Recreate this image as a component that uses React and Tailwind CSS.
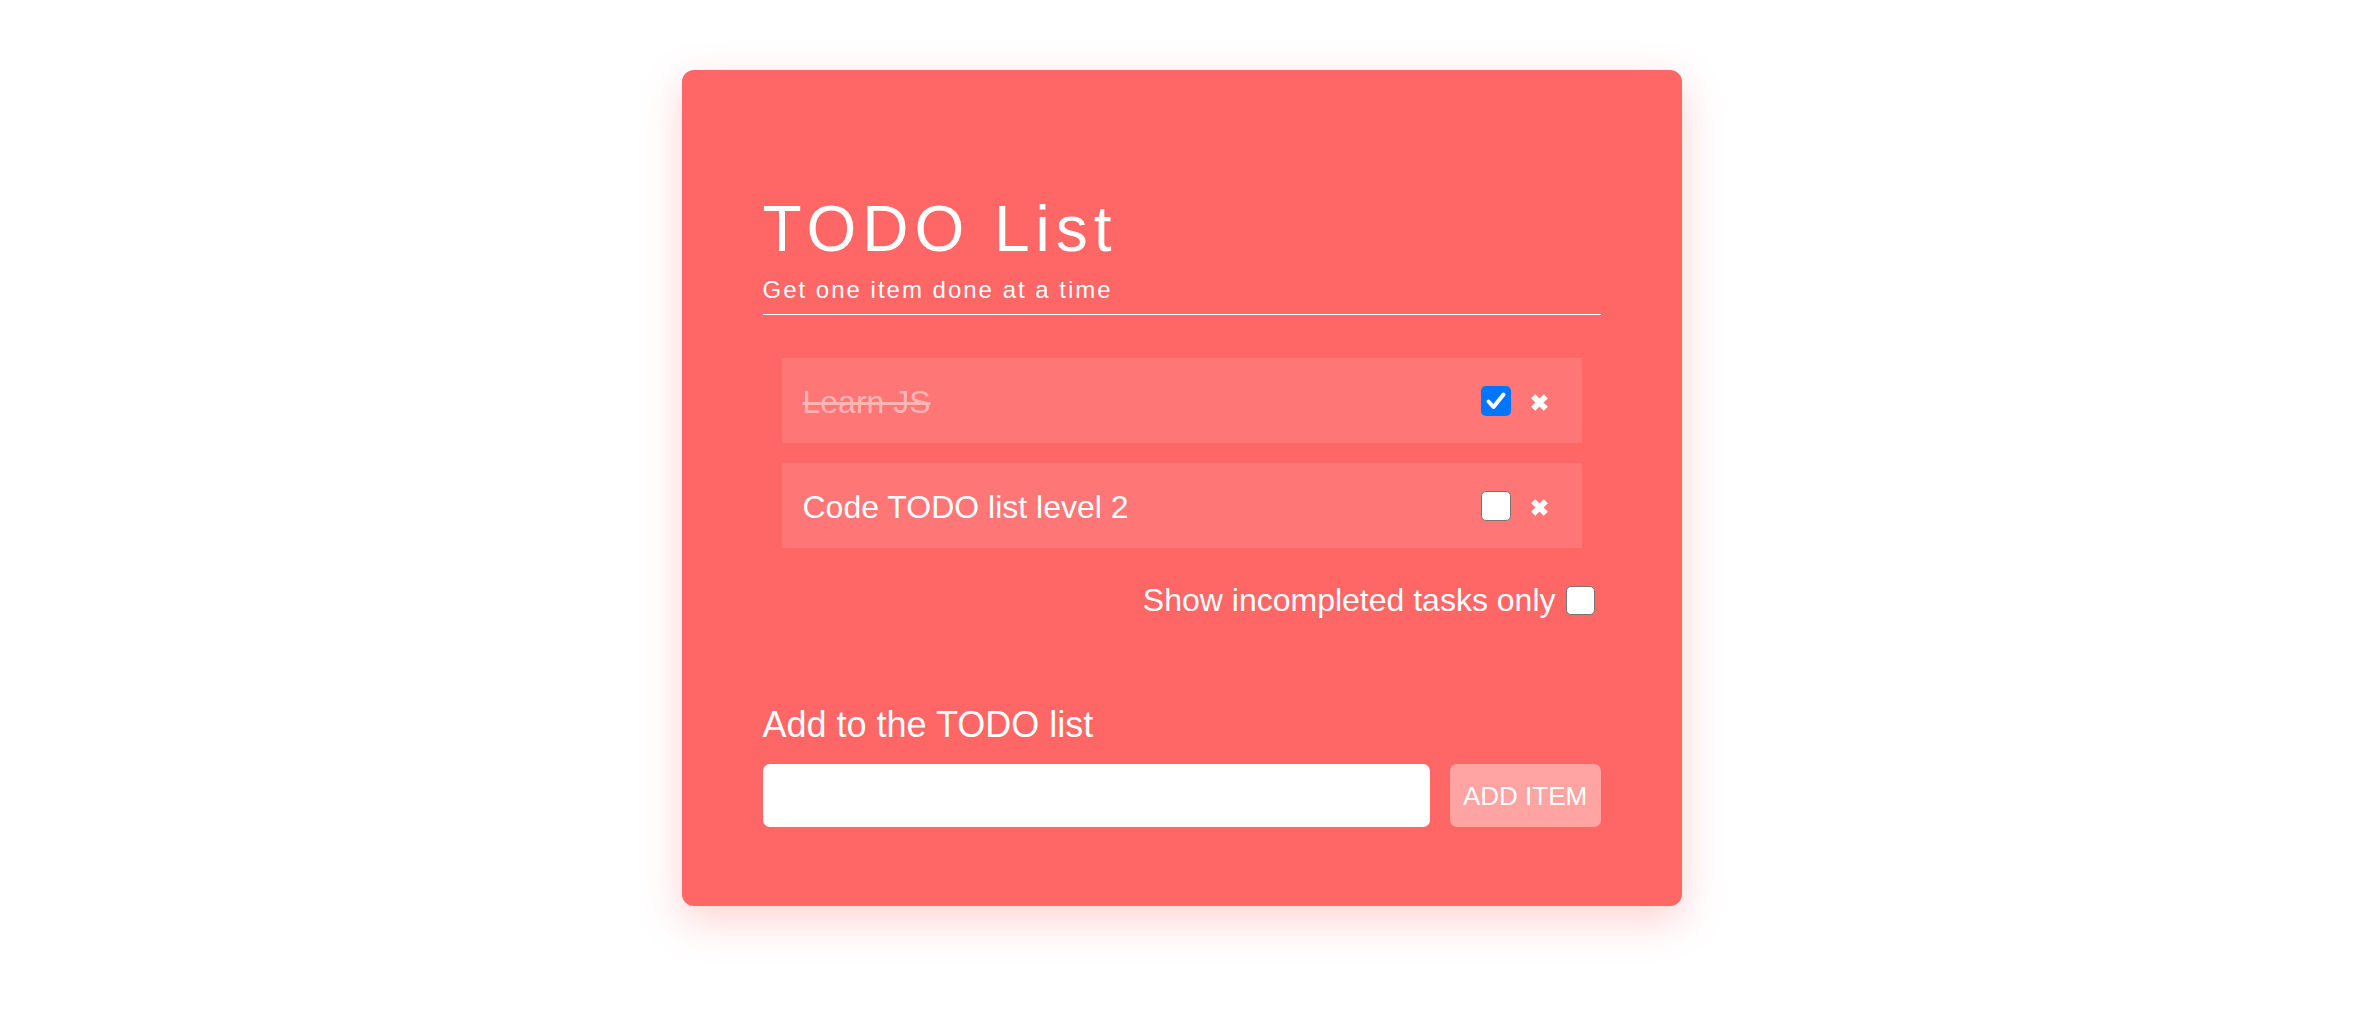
import { useState } from 'react';

const font = { fontFamily: '"Liberation Sans", Arial, Helvetica, sans-serif' };

const CheckBox = ({ checked, onChange, size = 'w-[30px] h-[30px]' }) => (
  <button
    type="button"
    onClick={onChange}
    className={`${size} shrink-0 rounded-[5px] flex items-center justify-center ${
      checked ? 'bg-[#0075ff]' : 'bg-white border-[1.5px] border-[#767676]'
    }`}
  >
    {checked && (
      <svg viewBox="0 0 30 30" className="w-[30px] h-[30px]">
        <path d="M7.5 15.5 L12.5 21 L22.5 8.5" fill="none" stroke="white" strokeWidth="4" strokeLinecap="round" strokeLinejoin="round" />
      </svg>
    )}
  </button>
);

const DeleteIcon = () => (
  <svg viewBox="0 0 19 19" className="w-[19px] h-[19px]">
    <path d="M3.2 3.2 L15.8 15.8 M15.8 3.2 L3.2 15.8" stroke="white" strokeWidth="5.8" strokeLinecap="butt" />
  </svg>
);

const TodoItem = ({ item, onToggle, onDelete }) => (
  <li className="h-[85px] bg-[#ff7676] flex items-center pl-[21px] pr-[33px]">
    <span
      className={`flex-1 text-[32px] leading-none pt-[2px] ${
        item.done ? 'line-through text-[#ffb5b5]' : 'text-white'
      }`}
    >
      {item.text}
    </span>
    <CheckBox checked={item.done} onChange={onToggle} />
    <button type="button" onClick={onDelete} className="ml-[19px] mt-[3px] flex items-center">
      <DeleteIcon />
    </button>
  </li>
);

export default function App() {
  const [items, setItems] = useState([
    { id: 1, text: 'Learn JS', done: true },
    { id: 2, text: 'Code TODO list level 2', done: false },
  ]);
  const [onlyOpen, setOnlyOpen] = useState(false);
  const [draft, setDraft] = useState('');

  const visible = onlyOpen ? items.filter((i) => !i.done) : items;

  const addItem = () => {
    if (!draft.trim()) return;
    setItems([...items, { id: Date.now(), text: draft.trim(), done: false }]);
    setDraft('');
  };

  return (
    <div className="min-h-screen bg-white flex justify-center pt-[70px] pr-[15px]" style={font}>
      <div className="w-[1000px] h-[836px] bg-[#ff6666] rounded-[12px] shadow-[0_14px_40px_rgba(255,102,102,0.3)] px-[81px] pt-[127px] text-white">
        <h1 className="text-[64px] leading-none tracking-[6px] font-normal">TODO List</h1>
        <p className="mt-[17px] text-[24px] leading-none tracking-[2px] pb-[12px] border-b border-white">
          Get one item done at a time
        </p>

        <ul className="mt-[43px] mx-[19px] flex flex-col gap-[20px]">
          {visible.map((item) => (
            <TodoItem
              key={item.id}
              item={item}
              onToggle={() => setItems(items.map((i) => (i.id === item.id ? { ...i, done: !i.done } : i)))}
              onDelete={() => setItems(items.filter((i) => i.id !== item.id))}
            />
          ))}
        </ul>

        <label className="mt-[36px] flex items-center justify-end gap-[10px] pr-[6px] text-[32px] leading-none">
          Show incompleted tasks only
          <CheckBox checked={onlyOpen} onChange={() => setOnlyOpen(!onlyOpen)} size="w-[29px] h-[29px]" />
        </label>

        <h2 className="mt-[91px] text-[36px] leading-none font-normal">Add to the TODO list</h2>
        <div className="mt-[21px] flex gap-[20px]">
          <input
            value={draft}
            onChange={(e) => setDraft(e.target.value)}
            className="w-[668px] h-[63px] bg-white rounded-[7px] px-4 text-[24px] text-gray-800 outline-none"
          />
          <button
            type="button"
            onClick={addItem}
            className="w-[151px] h-[63px] bg-[#ffa3a3] rounded-[7px] text-[26px] text-white leading-none"
          >
            ADD ITEM
          </button>
        </div>
      </div>
    </div>
  );
}
